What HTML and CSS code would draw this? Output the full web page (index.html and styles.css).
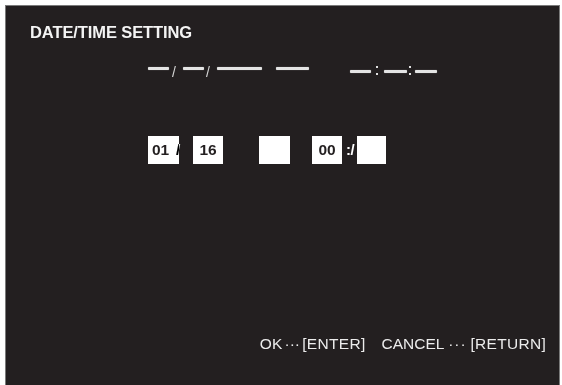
FILE: index.html
```html
<!DOCTYPE html>
<html>
<head>
<meta charset="utf-8">
<title>DATE/TIME SETTING</title>
<link rel="stylesheet" href="styles.css">
</head>
<body>
<div class="panel">
  <div class="title">DATE/TIME SETTING</div>

  <div class="dash-row">
    <div class="date-group">
      <div class="dash w21"></div>
      <span class="slash s1">/</span>
      <div class="dash w21"></div>
      <span class="slash s2">/</span>
      <div class="dash w45"></div>
      <div class="dash w33 ml14"></div>
    </div>
    <div class="time-group">
      <div class="dash w21"></div>
      <div class="colon c1"><i></i><i></i></div>
      <div class="dash w23"></div>
      <div class="colon c2"><i></i><i></i></div>
      <div class="dash w22"></div>
    </div>
  </div>

  <div class="box-row">
    <div class="box b1 left">01</div>
    <span class="box-slash">/</span>
    <div class="box b2">16</div>
    <div class="box b3"></div>
    <div class="box b4">00</div>
    <span class="box-sep">:/</span>
    <div class="box b5"></div>
  </div>

  <div class="footer">
    <span>OK</span><span class="dots d1">···</span><span class="key">[ENTER]</span>
    <span class="cancel">CANCEL</span><span class="dots d2">···</span><span class="key">[RETURN]</span>
  </div>
</div>
</body>
</html>
```

FILE: styles.css
```css
html, body {
  margin: 0;
  padding: 0;
  background: #ffffff;
  overflow: hidden;
}

.panel {
  box-sizing: border-box;
  margin: 5px 2px 0 5px;
  height: 380px;
  background: #231f20;
  border: 1px solid #7a7a7a;
  border-bottom: none;
  display: flex;
  flex-direction: column;
  padding-top: 18px;
  font-family: "Liberation Sans", Arial, sans-serif;
  color: #f2f2f2;
}

.title {
  margin-left: 24px;
  font-size: 16.5px;
  line-height: 17px;
  font-weight: bold;
  letter-spacing: -0.1px;
  color: #f4f4f4;
}

/* placeholder dashes */
.dash-row {
  display: flex;
  align-items: flex-start;
  margin-top: 25px;
  margin-left: 142px;
  height: 12px;
}

.date-group {
  display: flex;
  align-items: flex-start;
  width: 202px;
}

.time-group {
  display: flex;
  align-items: flex-start;
}

.dash {
  height: 3px;
  margin-top: 1px;
  background: #e4e4e4;
  border-radius: 1px;
  box-shadow: 0 0 1px #9a9a9a;
}

.time-group .dash {
  margin-top: 4px;
}

.w21 { width: 21px; }
.w22 { width: 22px; }
.w23 { width: 23px; }
.w33 { width: 33px; }
.w45 { width: 45px; }
.ml14 { margin-left: 14px; }

.slash {
  box-sizing: border-box;
  font-size: 14px;
  line-height: 14px;
  margin-top: -1px;
  color: #d6d6d6;
  text-align: left;
}

.s1 { width: 14px; padding-left: 3px; }
.s2 { width: 13px; padding-left: 2px; }

.colon {
  box-sizing: border-box;
  display: flex;
  flex-direction: column;
  justify-content: space-between;
  height: 9px;
}

.colon i {
  display: block;
  width: 2px;
  height: 2px;
  background: #e0e0e0;
}

.c1 { width: 13px; padding-left: 5px; }
.c2 { width: 8px; padding-left: 2px; }

/* input boxes */
.box-row {
  display: flex;
  align-items: center;
  margin-top: 58px;
  margin-left: 142px;
  height: 28px;
}

.box {
  box-sizing: border-box;
  height: 28px;
  background: #ffffff;
  color: #231f20;
  font-size: 15.5px;
  font-weight: bold;
  line-height: 28px;
  text-align: center;
  flex: none;
}

.box.left {
  text-align: left;
  padding-left: 4px;
}

.b1 { width: 31px; }
.b2 { width: 30px; margin-left: 8px; }
.b3 { width: 31px; margin-left: 36px; }
.b4 { width: 30px; margin-left: 22px; }
.b5 { width: 29px; }

.box-slash {
  flex: none;
  width: 9px;
  margin-left: -3px;
  font-size: 15.5px;
  font-weight: bold;
  line-height: 28px;
  color: #ffffff;
  mix-blend-mode: difference;
}

.box-sep {
  flex: none;
  box-sizing: border-box;
  width: 15px;
  padding-left: 4px;
  font-size: 15px;
  font-weight: bold;
  line-height: 28px;
  color: #ffffff;
  letter-spacing: -0.5px;
}

/* footer */
.footer {
  margin-top: auto;
  margin-bottom: 34px;
  padding-right: 13px;
  display: flex;
  justify-content: flex-end;
  font-size: 15.5px;
  line-height: 15px;
  color: #ececec;
  white-space: nowrap;
}

.dots {
  display: inline-block;
  text-align: center;
  letter-spacing: 0;
}

.d1 { width: 20px; }
.d2 { width: 26px; letter-spacing: 1px; }

.key {
  letter-spacing: 0.3px;
}

.cancel {
  margin-left: 16px;
}
```
